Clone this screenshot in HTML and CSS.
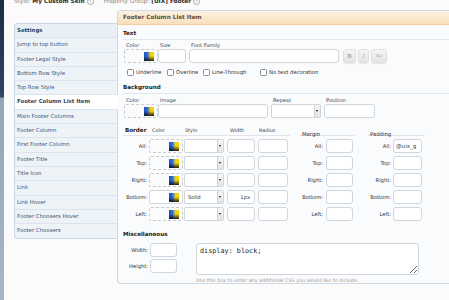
FILE: index.html
```html
<!DOCTYPE html>
<html>
<head>
<meta charset="utf-8">
<link rel="stylesheet" href="styles.css">
</head>
<body>
<div class="strip"></div>
<div class="page">
  <div class="crumbs">
    <span class="lbl">Style:</span> <b>My Custom Skin</b> <span class="info">?</span>
    <span class="lbl sp">Property Group:</span> <b>[UIX] Footer</b> <span class="info">?</span>
  </div>
  <div class="layout">
    <nav class="side">
      <div class="side-item head">Settings</div>
      <div class="side-item">Jump to top button</div>
      <div class="side-item">Footer Legal Style</div>
      <div class="side-item">Bottom Row Style</div>
      <div class="side-item">Top Row Style</div>
      <div class="side-item active">Footer Column List Item</div>
      <div class="side-item">Main Footer Columns</div>
      <div class="side-item">Footer Column</div>
      <div class="side-item">First Footer Column</div>
      <div class="side-item">Footer Title</div>
      <div class="side-item">Title Icon</div>
      <div class="side-item">Link</div>
      <div class="side-item">Link Hover</div>
      <div class="side-item">Footer Choosers Hover</div>
      <div class="side-item last">Footer Choosers</div>
    </nav>
    <section class="panel">
      <h2 class="ptitle">Footer Column List Item</h2>
      <div class="pbody">
        <h3 class="sec">Text</h3>
        <div class="fields">
          <div class="field"><label>Color</label><div class="colorbox w-color"><span class="swatch"></span></div></div>
          <div class="field"><label>Size</label><div class="inp w-size"></div></div>
          <div class="field gap3"><label>Font Family</label><div class="inp w-family"></div></div>
          <div class="tbtns">
            <span class="tbtn b">B</span>
            <span class="tbtn i">I</span>
            <span class="tbtn aa">Aa</span>
          </div>
        </div>
        <div class="checks">
          <span class="chk c1"><span class="box"></span>Underline</span>
          <span class="chk c2"><span class="box"></span>Overline</span>
          <span class="chk c3"><span class="box"></span>Line-Through</span>
          <span class="chk"><span class="box"></span>No text decoration</span>
        </div>

        <h3 class="sec sec-bg">Background</h3>
        <div class="fields f-bg">
          <div class="field"><label>Color</label><div class="colorbox w-color"><span class="swatch"></span></div></div>
          <div class="field"><label>Image</label><div class="inp w-image"></div></div>
          <div class="field gap3"><label>Repeat</label><div class="sel w-repeat"><span class="arrow"></span></div></div>
          <div class="field gap3"><label>Position</label><div class="inp w-pos"></div></div>
        </div>

        <div class="btable">
          <div class="bgroup g-border">
            <div class="bhead bcols">
              <span class="h-main">Border</span>
              <span class="h-sub p3">Color</span>
              <span class="h-sub p1">Style</span>
              <span class="h-sub p3">Width</span>
              <span class="h-sub p1">Radius</span>
            </div>
            <div class="brows bcols">
              <span class="rl">All:</span><div class="colorbox"><span class="swatch"></span></div><div class="sel"><span class="arrow"></span></div><div class="inp"></div><div class="inp"></div>
              <span class="rl">Top:</span><div class="colorbox"><span class="swatch"></span></div><div class="sel"><span class="arrow"></span></div><div class="inp"></div><div class="inp"></div>
              <span class="rl">Right:</span><div class="colorbox"><span class="swatch"></span></div><div class="sel"><span class="arrow"></span></div><div class="inp"></div><div class="inp"></div>
              <span class="rl">Bottom:</span><div class="colorbox solid"><span class="swatch"></span></div><div class="sel"><span class="val">Solid</span><span class="arrow"></span></div><div class="inp right">1px</div><div class="inp"></div>
              <span class="rl">Left:</span><div class="colorbox"><span class="swatch"></span></div><div class="sel"><span class="arrow"></span></div><div class="inp"></div><div class="inp"></div>
            </div>
          </div>
          <div class="bgroup g-margin">
            <div class="bhead"><span class="h-side">Margin</span></div>
            <div class="brows mcols">
              <span class="rl">All:</span><div class="inp"></div>
              <span class="rl">Top:</span><div class="inp"></div>
              <span class="rl">Right:</span><div class="inp"></div>
              <span class="rl">Bottom:</span><div class="inp"></div>
              <span class="rl">Left:</span><div class="inp"></div>
            </div>
          </div>
          <div class="bgroup g-padding">
            <div class="bhead"><span class="h-side">Padding</span></div>
            <div class="brows pcols">
              <span class="rl">All:</span><div class="inp txt">@uix_g</div>
              <span class="rl">Top:</span><div class="inp"></div>
              <span class="rl">Right:</span><div class="inp"></div>
              <span class="rl">Bottom:</span><div class="inp"></div>
              <span class="rl">Left:</span><div class="inp"></div>
            </div>
          </div>
        </div>

        <h3 class="sec sec-misc">Miscellaneous</h3>
        <div class="misc">
          <div class="mgrid">
            <span class="rl">Width:</span><div class="inp"></div>
            <span class="rl">Height:</span><div class="inp"></div>
          </div>
          <div class="cssbox">
            <textarea class="css" readonly>display: block;</textarea>
            <div class="hint">Use this box to enter any additional CSS you would like to include.</div>
          </div>
        </div>
      </div>
    </section>
  </div>
</div>
</body>
</html>
```

FILE: styles.css
```css
* { box-sizing: border-box; }
html, body { margin: 0; padding: 0; }
body {
  display: flex;
  width: 449px;
  height: 300px;
  overflow: hidden;
  background: #fbfbfc;
  font-family: "DejaVu Sans", Verdana, sans-serif;
  color: #333;
}
.strip {
  width: 4px;
  flex: none;
  background: linear-gradient(#1b2d44 0, #2b4260 88px, #33496a 97px, #95a6ba 98px, #a7b5c6 300px);
}
.page { flex: 1; padding-left: 10px; min-width: 0; }

.crumbs {
  height: 8px;
  margin-top: -3px;
  font-size: 5.8px;
  line-height: 8px;
  color: #8a8a8a;
  white-space: nowrap;
}
.crumbs b { color: #2e2e2e; }
.crumbs .sp { margin-left: 8px; }
.crumbs .info {
  display: inline-block;
  width: 7px; height: 7px;
  border: 1px solid #aaa;
  border-radius: 50%;
  font-size: 4px;
  line-height: 5px;
  text-align: center;
  color: #999;
  vertical-align: middle;
}

.layout { display: flex; align-items: flex-start; margin-top: 5px; }

.side {
  width: 103px;
  flex: none;
  margin-top: 13px;
  border: 1px solid #c9d6e3;
  border-right: none;
  border-radius: 4px 0 0 4px;
  background: #eef3f8;
}
.side-item {
  height: 14.3px;
  line-height: 13.3px;
  border-bottom: 1px solid #dbe4ed;
  padding-left: 2px;
  font-size: 5.4px;
  color: #3b5878;
  white-space: nowrap;
}
.side-item.head { font-weight: bold; color: #2c3e52; background: #e9eff6; border-radius: 4px 0 0 0; }
.side-item.active {
  position: relative;
  margin-right: -1px;
  background: #fff;
  font-weight: bold;
  color: #2c4360;
}
.side-item.last { border-bottom: none; border-radius: 0 0 0 4px; }

.panel {
  width: 340px;
  height: 274px;
  flex: none;
  border: 1px solid #cfd9e3;
  border-right: none;
  border-radius: 4px 0 0 4px;
  background: #fafbfc;
}
.ptitle {
  margin: 0;
  height: 14px;
  line-height: 13px;
  padding-left: 5px;
  background: linear-gradient(#fdf2e2, #f9dfbc);
  border-bottom: 1px solid #efcf9f;
  border-radius: 3px 0 0 0;
  font-size: 5.8px;
  font-weight: bold;
  color: #5e4b37;
}
.pbody { padding: 3px 0 0 5px; }

.sec {
  margin: 0;
  font-size: 5.6px;
  font-weight: bold;
  color: #222;
  line-height: 11px;
  border-bottom: 1px solid #e3e7ec;
}
.sec-bg { margin-top: 4px; }
.sec-misc { margin-top: 9px; line-height: 9px; border-bottom: none; }

.fields { display: flex; align-items: flex-end; margin-top: 2px; padding-left: 1px; }
.f-bg { margin-top: 3px; }
.field label {
  display: block;
  font-size: 5.1px;
  line-height: 7px;
  padding-left: 2px;
  color: #444;
}
.gap3 { margin-left: 3px; }

.inp {
  height: 14px;
  border: 1px solid #d0d6dd;
  border-radius: 3px;
  background: #fff;
  font-size: 5.2px;
  line-height: 12px;
  color: #333;
}
.inp.right { text-align: right; padding-right: 4px; }
.inp.txt { padding-left: 2px; overflow: hidden; white-space: nowrap; font-size: 5.6px; }

.colorbox {
  height: 14px;
  border: 1px dashed #c9c9c9;
  border-radius: 2px;
  display: flex;
  align-items: center;
  justify-content: flex-end;
  padding-right: 3px;
}
.colorbox.solid { border-style: solid; border-color: #d6d6d6; background: #fff; }
.swatch {
  width: 10px;
  height: 9px;
  background:
    linear-gradient(to bottom, rgba(0,0,0,0) 45%, rgba(10,10,20,0.9) 100%),
    linear-gradient(to right, #1d4fc4 0%, #2f6fd8 35%, #f2cf10 65%, #f7d800 100%);
}

.w-color { width: 34px; }
.w-size { width: 28px; }
.w-family { width: 150px; }
.w-image { width: 110px; }
.w-repeat { width: 50px; }
.w-pos { width: 51px; }

.sel {
  height: 14px;
  border: 1px solid #d0d6dd;
  border-radius: 2px;
  background: #fff;
  position: relative;
  font-size: 5.2px;
  line-height: 12px;
  color: #333;
}
.sel .val { padding-left: 3px; }
.sel .arrow {
  position: absolute;
  right: 0; top: 0; bottom: 0;
  width: 6px;
  background: linear-gradient(#f6f6f6, #e4e4e4);
  border-left: 1px solid #d0d0d0;
}
.sel .arrow::after {
  content: "";
  position: absolute;
  left: 1px; top: 5px;
  border-left: 1.5px solid transparent;
  border-right: 1.5px solid transparent;
  border-top: 2px solid #111;
}

.tbtns { display: flex; margin-left: 4px; gap: 2px; }
.tbtn {
  height: 14px;
  border-radius: 3px;
  background: linear-gradient(#f6f6f6, #e3e3e3);
  border: 1px solid #e0e0e0;
  box-shadow: 0 1px 1px rgba(0,0,0,0.08);
  color: #aaa;
  font-size: 5.4px;
  line-height: 12px;
  text-align: center;
  font-family: "DejaVu Serif", serif;
}
.tbtn.b { width: 13px; font-weight: bold; }
.tbtn.i { width: 11px; font-style: italic; }
.tbtn.aa { width: 16px; font-family: "DejaVu Sans", sans-serif; font-size: 4.6px; }

.checks {
  display: flex;
  align-items: center;
  height: 12px;
  margin-top: 3px;
  padding-left: 4px;
}
.chk {
  display: flex;
  align-items: center;
  gap: 2px;
  font-size: 5.3px;
  color: #333;
  white-space: nowrap;
}
.chk .box {
  width: 7px; height: 7px;
  border: 1px solid #8d8d8d;
  border-radius: 1.5px;
  background: #fff;
  flex: none;
}
.c1 { width: 40px; }
.c2 { width: 36px; }
.c3 { width: 57px; }

.btable { display: flex; margin-top: 8px; }
.bhead {
  height: 10px;
  line-height: 9px;
  border-bottom: 1px solid #e1e5ea;
  white-space: nowrap;
}
.brows {
  display: grid;
  grid-auto-rows: 14px;
  row-gap: 3px;
  margin-top: 3px;
  align-items: center;
}
.bcols { display: grid; grid-template-columns: 26px 35px 43px 31px 30px; }
.bhead.bcols { padding-right: 2px; width: 167px; }
.brows.bcols .colorbox { width: 34px; }
.brows.bcols .sel { width: 40px; }
.brows.bcols .inp:nth-child(5n+4) { width: 28px; }
.brows.bcols .inp:nth-child(5n) { width: 30px; }
.h-main { font-size: 5.6px; font-weight: bold; color: #222; padding-left: 2px; }
.h-sub { font-size: 4.9px; color: #444; }
.p3 { padding-left: 3px; }
.p1 { padding-left: 1px; }
.h-side { font-size: 5.3px; color: #222; padding-left: 2px; }

.rl {
  font-size: 5.2px;
  color: #333;
  text-align: right;
  padding-right: 2px;
  white-space: nowrap;
}
.g-margin { margin-left: 10px; width: 55px; }
.mcols { grid-template-columns: 23px 27px; column-gap: 3px; }
.mcols .rl { padding-right: 0; }
.g-padding { margin-left: 13px; width: 57px; }
.pcols { grid-template-columns: 23px 29px; column-gap: 2px; }
.pcols .rl { padding-right: 0; }

.misc { display: flex; margin-top: 4px; }
.mgrid {
  display: grid;
  grid-template-columns: 25px 27px;
  grid-auto-rows: 14px;
  column-gap: 2px;
  row-gap: 2px;
  align-items: center;
}
.mgrid .rl { padding-right: 0; }
.cssbox { margin-left: 19px; display: flex; flex-direction: column; }
.css {
  display: block;
  width: 223px;
  height: 32px;
  margin: 0;
  padding: 3px 3px;
  border: 1px solid #d0d6dd;
  border-radius: 3px;
  background: #fff;
  font-family: "DejaVu Sans Mono", monospace;
  font-size: 6.8px;
  line-height: 8px;
  color: #222;
  outline: none;
}
.hint {
  margin-top: 2px;
  font-size: 4.9px;
  line-height: 6px;
  color: #9a9a9a;
  white-space: nowrap;
}
```
